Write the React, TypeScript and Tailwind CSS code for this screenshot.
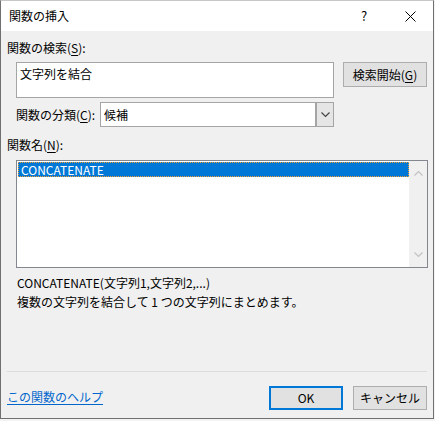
import React from 'react';

const Mn: React.FC<{ children: React.ReactNode }> = ({ children }) => <span className="underline underline-offset-2">{children}</span>;

const Chevron: React.FC<{ up?: boolean; className?: string }> = ({ up, className }) => (
  <svg width="9" height="6" viewBox="0 0 9 6" className={className}>
    <path d={up ? 'M0.5 5.5 L4.5 1.5 L8.5 5.5' : 'M0.5 0.5 L4.5 4.5 L8.5 0.5'} fill="none" stroke="currentColor" strokeWidth="1.2" />
  </svg>
);

const Btn: React.FC<{ children: React.ReactNode; primary?: boolean; className?: string }> = ({ children, primary, className }) => (
  <button
    className={`h-[24px] bg-[#e1e1e1] text-[12px] text-black flex items-center justify-center ${primary ? 'border-2 border-[#0078d7]' : 'border border-[#adadad]'} ${className ?? ''}`}
  >
    {children}
  </button>
);

export default function App() {
  return (
    <div className="w-[435px] h-[421px] bg-[#f3f3f3] font-['Noto_Sans_CJK_JP',sans-serif] text-[12px] text-black leading-[16px]">
      <div className="w-[434px] h-[419px] flex flex-col border border-t-[#c8c8c8] border-x-[#707070] border-b-[#707070] bg-[#f0f0f0]">
        {/* title bar */}
        <div className="h-[30px] bg-white flex items-center">
          <span className="pl-[8px] flex-1">関数の挿入</span>
          <div className="w-[46px] h-full flex items-center justify-center text-[13px]">?</div>
          <div className="w-[46px] h-full flex items-center justify-center">
            <svg width="11" height="11" viewBox="0 0 11 11">
              <path d="M0.5 0.5 L10.5 10.5 M10.5 0.5 L0.5 10.5" stroke="#000" strokeWidth="1" />
            </svg>
          </div>
        </div>

        {/* body */}
        <div className="flex-1 flex flex-col pl-[6px] pr-[6px]">
          <div className="mt-[9px]">関数の検索(<Mn>S</Mn>):</div>

          <div className="mt-[6px] pl-[9px] flex items-start">
            <div className="w-[318px] h-[36px] bg-white border border-[#a5a5a5] px-[3px] pt-[3px]">文字列を結合</div>
            <Btn className="ml-[9px] w-[84px] h-[25px]">検索開始(<Mn>G</Mn>)</Btn>
          </div>

          <div className="mt-[4px] pl-[9px] flex items-center">
            <span className="w-[84px]">関数の分類(<Mn>C</Mn>):</span>
            <div className="w-[234px] h-[25px] bg-white border border-[#a5a5a5] flex">
              <span className="flex-1 pl-[3px] flex items-center">候補</span>
              <div className="w-[18px] h-full bg-[#e5e5e5] border-l-2 border-[#a5a5a5] flex items-center justify-center text-[#444]">
                <Chevron />
              </div>
            </div>
          </div>

          <div className="mt-[10px]">関数名(<Mn>N</Mn>):</div>

          <div className="mt-[7px] ml-[9px] w-[412px] h-[108px] bg-white border border-[#828790] flex">
            <div className="flex-1 pt-[1px] pl-[1px]">
              <div className="h-[15px] bg-[#0078d7] text-white border border-dotted border-[#f0a030] flex items-center pl-[2px] leading-none">
                CONCATENATE
              </div>
            </div>
            <div className="w-[18px] bg-[#f0f0f0] flex flex-col items-center justify-between py-[9px] text-[#c2c2c2]">
              <Chevron up />
              <Chevron />
            </div>
          </div>

          <div className="mt-[5px] pl-[10px] leading-[19px]">
            <div>CONCATENATE(文字列1,文字列2,...)</div>
            <div>複数の文字列を結合して 1 つの文字列にまとめます。</div>
          </div>

          <div className="mt-[60px] h-px bg-[#dcdcdc]" />

          <div className="mt-[14px] flex items-center">
            <a className="flex-1 text-[#0066cc] underline underline-offset-2 self-start mt-[3px]">この関数のヘルプ</a>
            <Btn primary className="w-[74px]">OK</Btn>
            <Btn className="ml-[10px] w-[74px]">キャンセル</Btn>
          </div>
        </div>
      </div>
    </div>
  );
}
